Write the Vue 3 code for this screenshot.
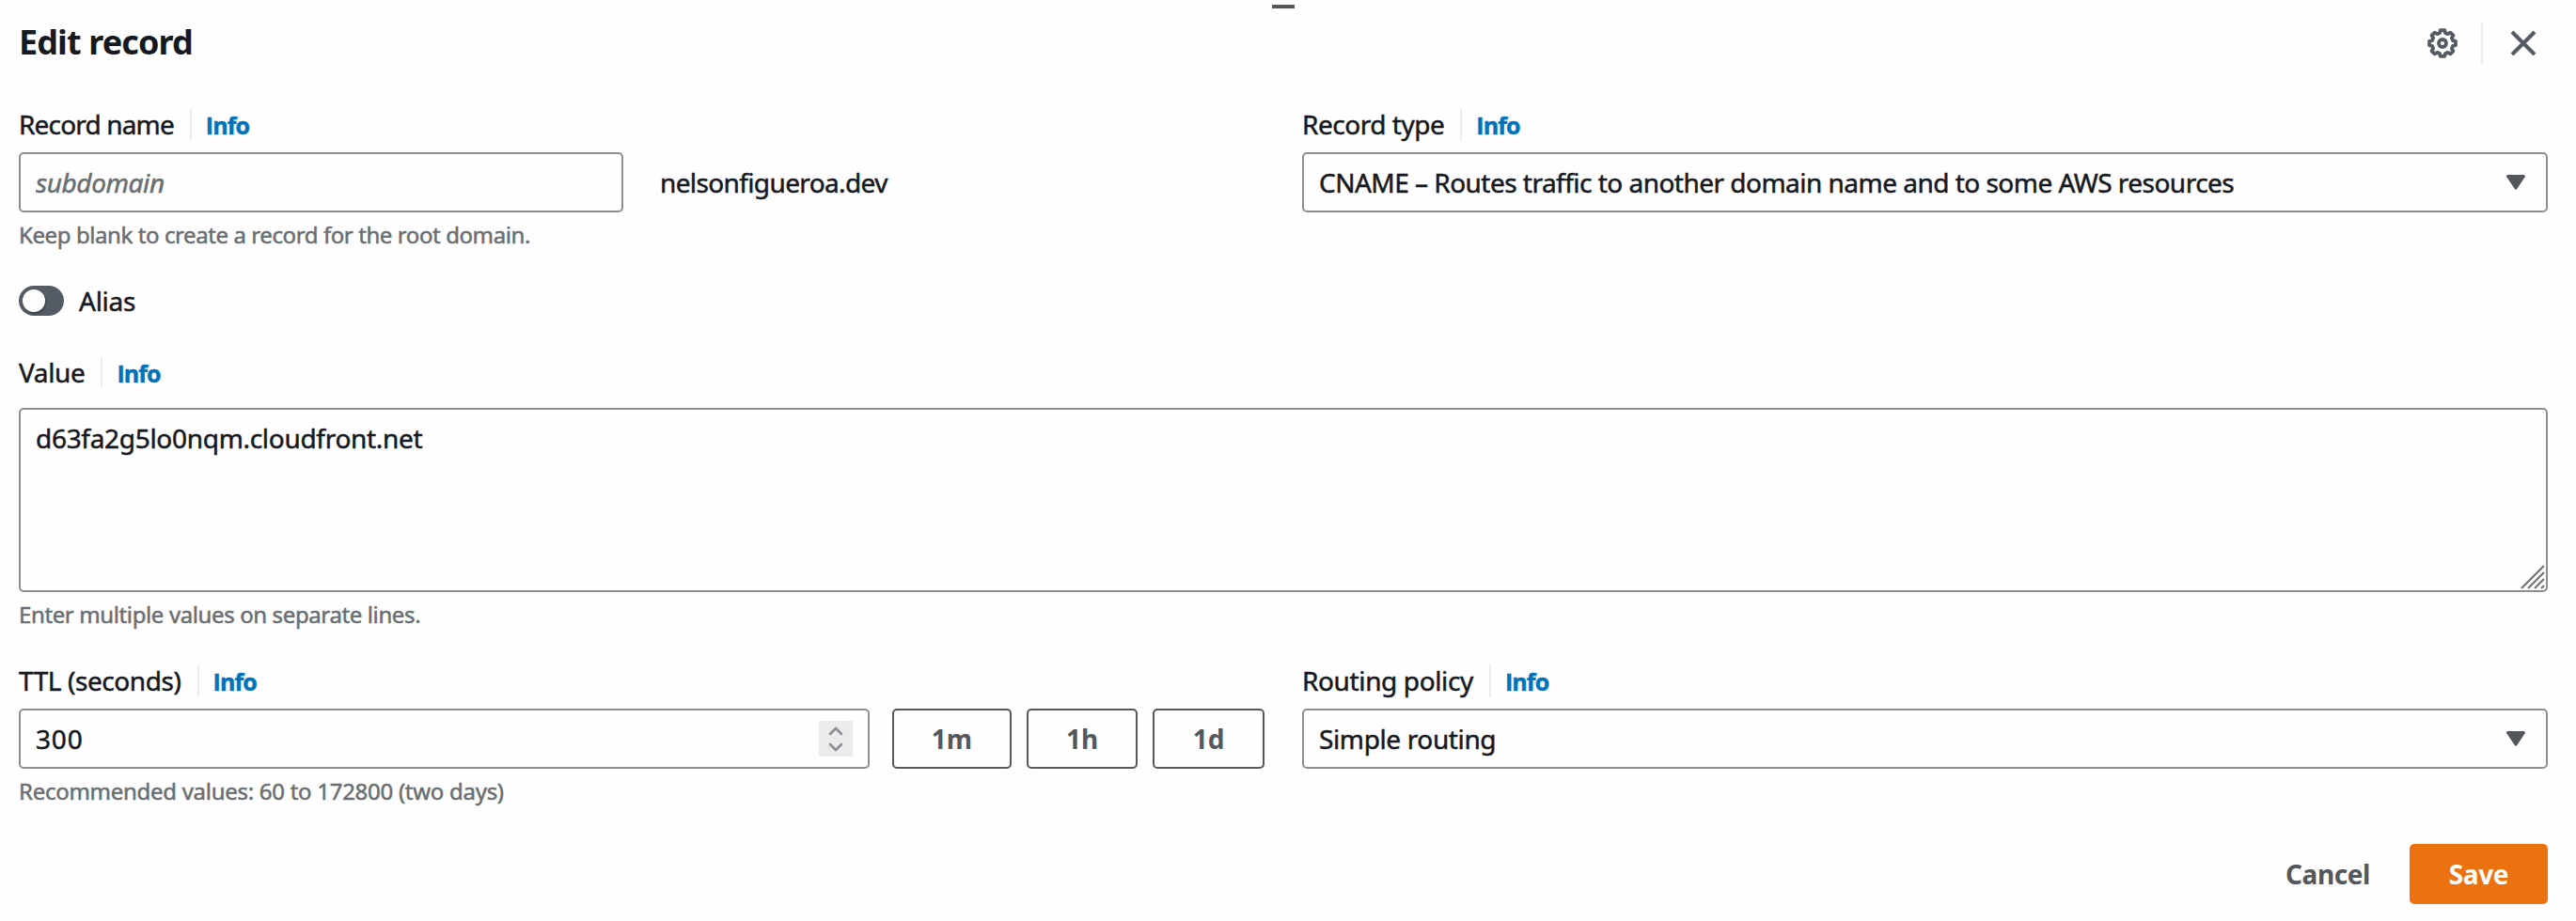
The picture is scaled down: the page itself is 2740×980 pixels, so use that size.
<script setup>
import { ref } from 'vue'

const recordName = ref('')
const value = ref('d63fa2g5lo0nqm.cloudfront.net')
const ttl = ref('300')
const presets = [
  { label: '1m', size: 'wide' },
  { label: '1h', size: 'mid' },
  { label: '1d', size: 'end' },
]

// Eight-toothed gear outline, centred in a 32 unit box
const gearPoints = []
for (let i = 0; i < 8; i++) {
  for (const [radius, offset] of [[11.4, -15], [14.1, -9], [14.1, 9], [11.4, 15]]) {
    const angle = ((i * 45 + offset) * Math.PI) / 180
    gearPoints.push(`${(16 + radius * Math.sin(angle)).toFixed(2)},${(16 - radius * Math.cos(angle)).toFixed(2)}`)
  }
}
const gearOutline = gearPoints.join(' ')
</script>

<template>
  <main class="panel">
    <div class="grip"></div>

    <header class="header">
      <h1 class="title">Edit record</h1>
      <div class="tools">
        <svg class="gear" viewBox="0 0 32 32" width="32" height="32" fill="none" stroke="#545b64" stroke-width="3.8" stroke-linejoin="round">
          <polygon :points="gearOutline" />
          <circle cx="16" cy="16" r="4" />
        </svg>
        <span class="tool-line"></span>
        <svg class="close" viewBox="0 0 28 28" width="28" height="28" fill="none" stroke="#545b64" stroke-width="4">
          <path d="M2 2 26 26M26 2 2 26" />
        </svg>
      </div>
    </header>

    <section class="columns">
      <div class="field">
        <div class="label-row">
          <label class="label t-record-name">Record name</label><i class="line"></i><a class="info">Info</a>
        </div>
        <div class="name-row">
          <input v-model="recordName" class="box name-input" placeholder="subdomain" />
          <span class="domain">nelsonfigueroa.dev</span>
        </div>
        <p class="hint t-keep">Keep blank to create a record for the root domain.</p>
      </div>
      <div class="field">
        <div class="label-row">
          <label class="label t-record-type">Record type</label><i class="line"></i><a class="info">Info</a>
        </div>
        <div class="box select">
          <span class="t-cname">CNAME – Routes traffic to another domain name and to some AWS resources</span>
          <svg class="caret" viewBox="0 0 20 16" width="20" height="16"><path d="M1.5 1.5H18.5L10 14.2Z" fill="#54585d" stroke="#54585d" stroke-width="3" stroke-linejoin="round" /></svg>
        </div>
      </div>
    </section>

    <div class="alias">
      <span class="switch"><span class="knob"></span></span>
      <span class="alias-text">Alias</span>
    </div>

    <section class="value-field">
      <div class="label-row">
        <label class="label t-value">Value</label><i class="line short"></i><a class="info">Info</a>
      </div>
      <div class="area-wrap">
        <textarea v-model="value" class="area" spellcheck="false"></textarea>
        <svg class="resize" viewBox="0 0 26 26" width="26" height="26" stroke="#6e6e70" stroke-width="2" fill="none">
          <path d="M1 25 25 1M8 25 25 8M15 25 25 15M22 25 25 22" />
        </svg>
      </div>
      <p class="hint t-enter">Enter multiple values on separate lines.</p>
    </section>

    <section class="columns">
      <div class="field">
        <div class="label-row">
          <label class="label t-ttl">TTL (seconds)</label><i class="line"></i><a class="info">Info</a>
        </div>
        <div class="ttl-row">
          <div class="box ttl">
            <span class="t-num">{{ ttl }}</span>
            <span class="spinner">
              <svg viewBox="0 0 36 38" width="36" height="38" fill="none" stroke="#8d8d92" stroke-width="2.6" stroke-linecap="round" stroke-linejoin="round">
                <path d="M12 14 18 8 24 14M12 25 18 31 24 25" />
              </svg>
            </span>
          </div>
          <button v-for="p in presets" :key="p.label" class="preset" :class="p.size">{{ p.label }}</button>
        </div>
        <p class="hint t-rec">Recommended values: 60 to 172800 (two days)</p>
      </div>
      <div class="field">
        <div class="label-row">
          <label class="label t-routing">Routing policy</label><i class="line"></i><a class="info">Info</a>
        </div>
        <div class="box select">
          <span class="t-simple">Simple routing</span>
          <svg class="caret" viewBox="0 0 20 16" width="20" height="16"><path d="M1.5 1.5H18.5L10 14.2Z" fill="#54585d" stroke="#54585d" stroke-width="3" stroke-linejoin="round" /></svg>
        </div>
      </div>
    </section>

    <footer class="footer">
      <button class="cancel">Cancel</button>
      <button class="save">Save</button>
    </footer>
  </main>
</template>

<style>
body {
  background: #fefefe;
}
</style>

<style scoped>
.panel {
  position: relative;
  box-sizing: border-box;
  width: 2740px;
  height: 980px;
  padding: 20px 30px 0 20px;
  background: #fefefe;
  color: #16191f;
  font-family: 'Noto Sans', 'Open Sans', sans-serif;
  font-size: 28px;
  -webkit-text-stroke: 0.5px currentColor;
}
.panel * {
  box-sizing: border-box;
}
.grip {
  position: absolute;
  left: 1353px;
  top: 5px;
  width: 24px;
  height: 4px;
  background: #54585d;
}
.header {
  display: flex;
  justify-content: space-between;
  height: 48px;
  margin-bottom: 46px;
}
.title {
  margin: 0;
  font-size: 36px;
  line-height: 50px;
  font-weight: 700;
  letter-spacing: -0.9px;
  -webkit-text-stroke: 0;
}
.tools {
  display: flex;
  align-items: center;
  padding: 3px 12px 0 0;
}
.tool-line {
  width: 2px;
  height: 46px;
  margin: 0 29px 0 25px;
  background: #eaeded;
}
.columns {
  display: grid;
  grid-template-columns: 1325px 1325px;
  column-gap: 40px;
}
.label-row {
  display: flex;
  align-items: baseline;
  height: 36px;
  margin-bottom: 12px;
  line-height: 36px;
}
.label {
  white-space: nowrap;
}
.line {
  align-self: center;
  width: 2px;
  height: 35px;
  margin: 0 15px 0 17px;
  background: #eaeded;
}
.line.short {
  height: 32px;
}
.info {
  color: #0073bb;
  font-family: 'Open Sans', sans-serif;
  font-size: 25px;
  font-weight: 700;
  letter-spacing: -0.9px;
}
.box {
  height: 64px;
  border: 2px solid #8c8f90;
  border-radius: 5px;
  background: #fefefe;
  line-height: 60px;
}
.name-row {
  display: flex;
  gap: 39px;
  line-height: 64px;
}
.name-input {
  width: 643px;
  padding: 0 16px;
  outline: 0;
  color: inherit;
  font-family: inherit;
  font-size: 28px;
}
.name-input::placeholder {
  color: #696e72;
  opacity: 1;
  font-style: italic;
  letter-spacing: -0.4px;
}
.domain {
  letter-spacing: -0.62px;
}
.hint {
  margin: 8px 0 0;
  color: #696e72;
  font-size: 24px;
  line-height: 32px;
}
.select {
  display: flex;
  align-items: center;
  justify-content: space-between;
  padding: 0 22px 0 16px;
}
.caret {
  display: block;
}
.alias {
  display: flex;
  align-items: center;
  height: 36px;
  margin: 36px 0 40px;
}
.switch {
  display: flex;
  align-items: center;
  width: 48px;
  height: 32px;
  padding-left: 4px;
  border-radius: 16px;
  background: #545b64;
}
.knob {
  width: 24px;
  height: 24px;
  border-radius: 50%;
  background: #fefefe;
  box-shadow: 1px 2px 2px rgba(0, 0, 0, 0.3);
}
.alias-text {
  margin-left: 16px;
  letter-spacing: -0.25px;
}
.value-field {
  margin-bottom: 36px;
}
.value-field .label-row {
  margin-bottom: 20px;
}
.area-wrap {
  position: relative;
  height: 196px;
}
.area {
  display: block;
  width: 100%;
  height: 196px;
  padding: 12px 16px;
  border: 2px solid #8c8f90;
  border-radius: 5px;
  outline: 0;
  resize: none;
  background: #fefefe;
  color: inherit;
  font-family: inherit;
  font-size: 28px;
  line-height: 36px;
  letter-spacing: -0.3px;
}
.resize {
  position: absolute;
  right: 3px;
  bottom: 3px;
}
.ttl-row {
  display: flex;
}
.ttl {
  display: flex;
  align-items: center;
  justify-content: space-between;
  width: 905px;
  margin-right: 24px;
  padding: 0 16px;
}
.spinner {
  width: 36px;
  height: 38px;
  background: #ebeaed;
}
.spinner svg {
  display: block;
}
button {
  height: 64px;
  padding: 0;
  border-radius: 5px;
  font-family: inherit;
  font-size: 28px;
  font-weight: 700;
  -webkit-text-stroke: 0;
}
.preset {
  margin-right: 16px;
  border: 2px solid #54585d;
  background: #fefefe;
  color: #54585d;
}
.wide {
  width: 127px;
}
.mid {
  width: 118px;
}
.end {
  width: 119px;
  margin-right: 0;
}
.footer {
  display: flex;
  justify-content: flex-end;
  margin-top: 40px;
}
.cancel {
  margin-right: 42px;
  border: 0;
  background: transparent;
  color: #54585d;
  letter-spacing: -0.42px;
}
.save {
  width: 147px;
  border: 0;
  background: #ec7211;
  color: #fff;
  letter-spacing: -0.4px;
}
.t-record-name { letter-spacing: -0.84px; }
.t-record-type { letter-spacing: -0.47px; }
.t-value { letter-spacing: -0.37px; }
.t-ttl { letter-spacing: -0.42px; }
.t-routing { letter-spacing: -0.37px; }
.t-keep { letter-spacing: -0.41px; }
.t-enter { letter-spacing: -0.38px; }
.t-rec { letter-spacing: -0.28px; }
.t-cname { letter-spacing: -0.52px; }
.t-simple { letter-spacing: -0.37px; }
.t-num { letter-spacing: 0.8px; }
</style>
